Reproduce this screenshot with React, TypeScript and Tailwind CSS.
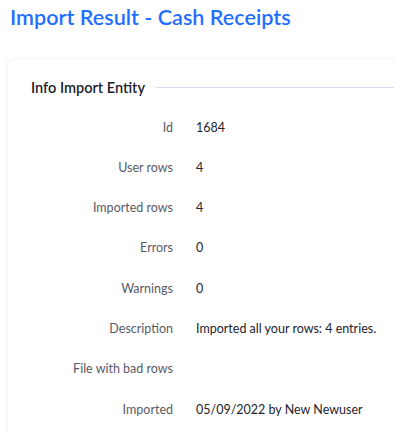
import React from "react";

const rows: [string, string][] = [
  ["Id", "1684"],
  ["User rows", "4"],
  ["Imported rows", "4"],
  ["Errors", "0"],
  ["Warnings", "0"],
  ["Description", "Imported all your rows: 4 entries."],
  ["File with bad rows", ""],
  ["Imported", "05/09/2022 by New Newuser"],
];

export default function App() {
  return (
    <div className="w-[394px] h-[433px] overflow-hidden bg-white" style={{ fontFamily: "Lato, 'Open Sans', sans-serif" }}>
      <h1 className="pl-[10px] pt-[3px] text-[21.6px] leading-[28px] font-semibold text-[#1f6fff]">
        Import Result - Cash Receipts
      </h1>
      <div className="ml-[8px] mt-[29px] w-[420px] rounded-md bg-white shadow-[0_0_6px_rgba(0,0,0,0.08)] pl-[23px] pt-[17px] pb-8">
        <div className="flex items-center gap-[11px]">
          <span className="text-[14.5px] font-semibold text-[#1d1d2b] whitespace-nowrap">Info Import Entity</span>
          <div className="flex-1 h-px bg-[#d4def5]" />
        </div>
        <div className="mt-[9px] flex flex-col">
          {rows.map(([k, v]) => (
            <div key={k} className="flex h-[40.3px] items-center text-[12.5px]">
              <div className="w-[142px] text-right text-[#5a5a66]">{k}</div>
              <div className="pl-[23px] text-[#23232e]">{v}</div>
            </div>
          ))}
        </div>
      </div>
    </div>
  );
}
